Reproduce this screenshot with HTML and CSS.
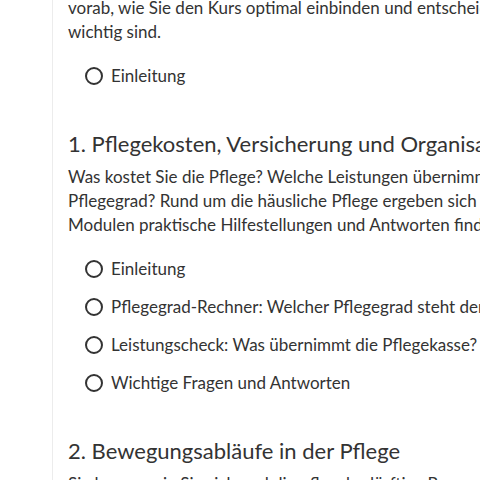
FILE: index.html
```html
<!DOCTYPE html>
<html lang="de">
<head>
  <meta charset="UTF-8">
  <meta name="viewport" content="width=device-width, initial-scale=1.0">
  <title>Kursübersicht</title>
  <link rel="stylesheet" href="styles.css">
</head>
<body>
  <main class="content">
    <section class="intro">
      <p>vorab, wie Sie den Kurs optimal einbinden und entscheiden, welche Module für Sie wichtig sind.</p>
      <ul class="items">
        <li><span class="radio"></span>Einleitung</li>
      </ul>
    </section>

    <section class="module">
      <h2>1. Pflegekosten, Versicherung und Organisation</h2>
      <p>Was kostet Sie die Pflege? Welche Leistungen übernimmt die Pflegekasse bei welchem Pflegegrad? Rund um die häusliche Pflege ergeben sich viele Fragen. In den folgenden Modulen praktische Hilfestellungen und Antworten finden Sie hier.</p>
      <ul class="items">
        <li><span class="radio"></span>Einleitung</li>
        <li><span class="radio"></span>Pflegegrad-Rechner: Welcher Pflegegrad steht der pflegebedürftigen Person zu?</li>
        <li><span class="radio"></span>Leistungscheck: Was übernimmt die Pflegekasse?</li>
        <li><span class="radio"></span>Wichtige Fragen und Antworten</li>
      </ul>
    </section>

    <section class="module">
      <h2>2. Bewegungsabläufe in der Pflege</h2>
      <p>Sie lernen, wie Sie sich und die pflegebedürftige Person bei alltäglichen Bewegungen schonen.</p>
    </section>
  </main>
</body>
</html>
```

FILE: styles.css
```css
body {
  margin: 0;
  overflow: hidden;
  background: #fff;
  font-family: Lato, "Liberation Sans", sans-serif;
  color: #333;
}
.content {
  width: 660px;
  margin: -4px 0 0 52px;
  padding: 0 15px 40px;
  border-left: 1px solid #ececec;
}
p {
  margin: 0;
  font-size: 17px;
  line-height: 24px;
}
h2 {
  margin: 42px 0 7px;
  font-size: 22px;
  font-weight: normal;
  line-height: 28px;
}
.items {
  list-style: none;
  margin: 20px 0 0;
  padding-left: 17px;
}
.items li {
  display: flex;
  align-items: center;
  gap: 8px;
  font-size: 17px;
  line-height: 24px;
  white-space: nowrap;
}
.items li + li {
  margin-top: 14px;
}
.radio {
  flex: none;
  width: 14px;
  height: 14px;
  border: 2px solid #333;
  border-radius: 50%;
}
```
